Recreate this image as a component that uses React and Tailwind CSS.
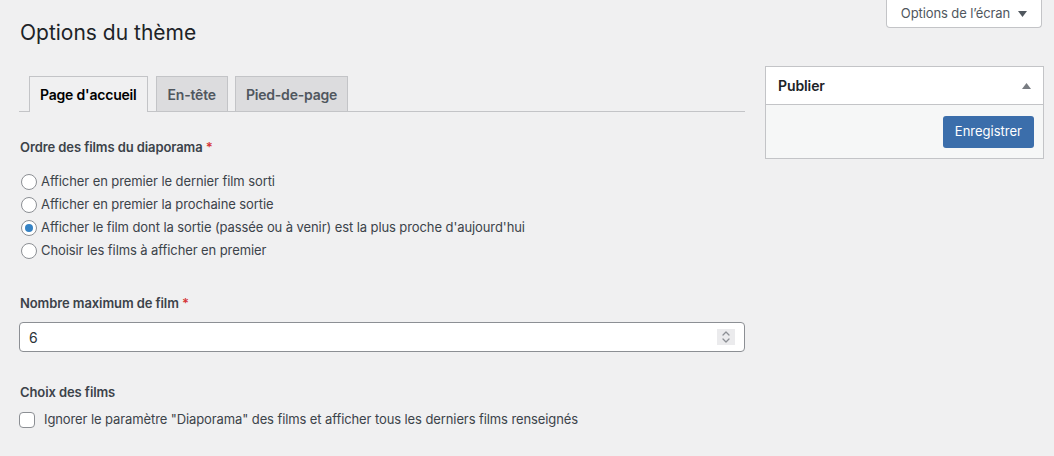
import React from "react";

function Radio({ checked, label }) {
  return (
    <label className="flex items-center h-[23px]">
      <span className="w-4 h-4 rounded-full border border-[#8c8f94] bg-white flex items-center justify-center ml-[21px] shrink-0">
        {checked && <span className="w-2 h-2 rounded-full bg-[#3582c4]" />}
      </span>
      <span className="ml-[4px] text-[13px] tracking-[-0.09px] text-[#3c434a]">{label}</span>
    </label>
  );
}

function Tri({ up, color }) {
  return (
    <svg width="9" height="6" viewBox="0 0 9 6">
      <path d={up ? "M0 6 L4.5 0 L9 6 Z" : "M0 0 L4.5 6 L9 0 Z"} fill={color} />
    </svg>
  );
}

export default function App() {
  return (
    <div
      className="w-[1054px] h-[456px] bg-[#f0f0f1] overflow-hidden relative"
      style={{ fontFamily: 'Inter, "Liberation Sans", Arial, sans-serif' }}
    >
      <div className="absolute top-0 right-[12px] w-[156px] h-[28px] bg-white border border-t-0 border-[#c3c4c7] rounded-b-[4px] flex items-center justify-center text-[13px] tracking-[-0.1px] text-[#50575e] gap-[8px]">
        <span>Options de l’écran</span>
        <Tri color="#50575e" />
      </div>
      <div className="flex pl-[19px] pr-[10px] gap-[20px]">
        <div className="w-[726px] shrink-0">
          <h1 className="mt-[18px] h-[30px] leading-[30px] text-[21px] text-[#1d2327] pl-[1px]">Options du thème</h1>
          <div className="mt-[28px] h-[36px] border-b border-[#c3c4c7] flex items-end pl-[10px] tracking-[-0.2px]">
            <div className="h-[36px] px-[10px] border border-b-0 border-[#c3c4c7] bg-[#f0f0f1] -mb-px flex items-center text-[14px] font-semibold text-[#000]">Page d'accueil</div>
            <div className="ml-[8px] h-[35px] px-[11px] border border-b-0 border-[#c3c4c7] bg-[#dcdcde] flex items-center text-[14px] font-semibold text-[#50575e]">En-tête</div>
            <div className="ml-[7px] h-[35px] px-[10px] border border-b-0 border-[#c3c4c7] bg-[#dcdcde] flex items-center text-[14px] font-semibold text-[#50575e]">Pied-de-page</div>
          </div>
          <div className="mt-[25px] h-[20px] leading-[20px] pl-[1px] text-[13px] tracking-[-0.09px] font-semibold text-[#3c434a]">
            Ordre des films du diaporama <span className="text-[#d63638]">*</span>
          </div>
          <div className="mt-[13px] -ml-[19px]">
            <Radio label="Afficher en premier le dernier film sorti" />
            <Radio label="Afficher en premier la prochaine sortie" />
            <Radio checked label="Afficher le film dont la sortie (passée ou à venir) est la plus proche d'aujourd'hui" />
            <Radio label="Choisir les films à afficher en premier" />
          </div>
          <div className="mt-[31px] h-[20px] leading-[20px] pl-[1px] text-[13px] tracking-[-0.09px] font-semibold text-[#3c434a]">
            Nombre maximum de film <span className="text-[#d63638]">*</span>
          </div>
          <div className="mt-[9px] h-[30px] bg-white border border-[#8c8f94] rounded-[4px] flex items-center pl-[9px] pr-[9px] text-[14px] text-[#2c3338]">
            <span className="flex-1">6</span>
            <span className="w-[18px] h-[16px] bg-[#ebebed] flex items-center justify-center">
              <svg width="10" height="14" viewBox="0 0 10 14" fill="none" stroke="#8c8f94" strokeWidth="1.3" strokeLinecap="round" strokeLinejoin="round">
                <path d="M2 5 L5 2 L8 5" />
                <path d="M2 9 L5 12 L8 9" />
              </svg>
            </span>
          </div>
          <div className="mt-[30px] h-[20px] leading-[20px] pl-[1px] text-[13px] tracking-[-0.09px] font-semibold text-[#3c434a]">Choix des films</div>
          <label className="mt-[10px] flex items-center h-[16px]">
            <span className="w-4 h-4 rounded-[4px] border border-[#8c8f94] bg-white shrink-0" />
            <span className="ml-[9px] text-[13px] tracking-[-0.1px] text-[#3c434a]">Ignorer le paramètre "Diaporama" des films et afficher tous les derniers films renseignés</span>
          </label>
        </div>
        <div className="w-[280px] mt-[66px] self-start border border-[#c3c4c7] bg-white">
          <div className="h-[38px] flex items-center justify-between pl-[12px] pr-[12px] border-b border-[#c3c4c7]">
            <span className="text-[14px] font-semibold tracking-[-0.1px] text-[#1d2327]">Publier</span>
            <Tri up color="#787c82" />
          </div>
          <div className="bg-[#f6f7f7] h-[53px] flex items-center justify-end pr-[9px]">
            <button className="h-[32px] px-[12px] rounded-[3px] bg-[#3b6eab] text-white text-[13px]">Enregistrer</button>
          </div>
        </div>
      </div>
    </div>
  );
}
